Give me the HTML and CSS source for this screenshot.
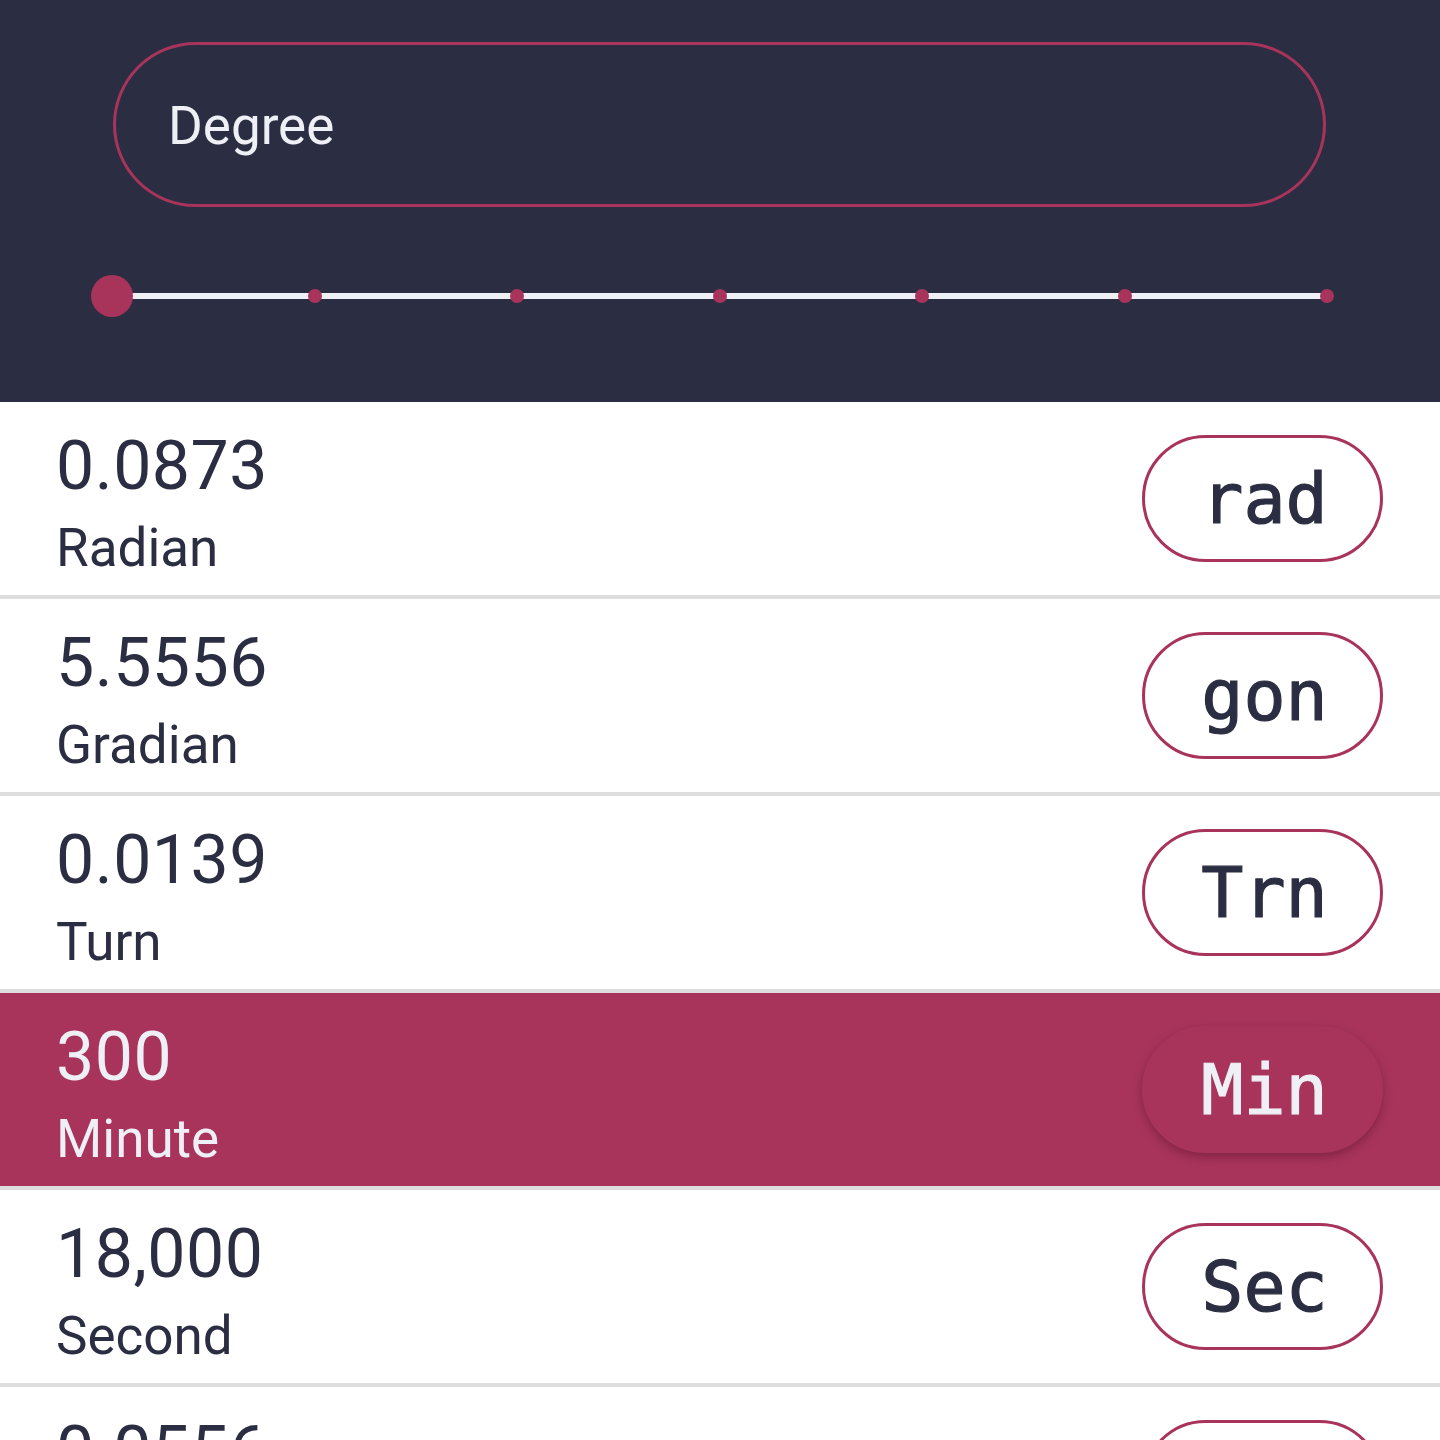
FILE: index.html
```html
<!DOCTYPE html>
<html lang="en">
<head>
<meta charset="utf-8">
<title>Angle converter</title>
<link rel="stylesheet" href="styles.css">
</head>
<body>
<header class="header">
  <div class="unit-field">Degree</div>
  <div class="slider">
    <span class="stop thumb"></span>
    <span class="stop"></span>
    <span class="stop"></span>
    <span class="stop"></span>
    <span class="stop"></span>
    <span class="stop"></span>
    <span class="stop"></span>
  </div>
</header>
<main class="list">
  <div class="row">
    <div class="texts"><div class="value">0.0873</div><div class="name">Radian</div></div>
    <div class="chip">rad</div>
  </div>
  <div class="row">
    <div class="texts"><div class="value">5.5556</div><div class="name">Gradian</div></div>
    <div class="chip">gon</div>
  </div>
  <div class="row">
    <div class="texts"><div class="value">0.0139</div><div class="name">Turn</div></div>
    <div class="chip">Trn</div>
  </div>
  <div class="row active">
    <div class="texts"><div class="value">300</div><div class="name">Minute</div></div>
    <div class="chip">Min</div>
  </div>
  <div class="row">
    <div class="texts"><div class="value">18,000</div><div class="name">Second</div></div>
    <div class="chip">Sec</div>
  </div>
  <div class="row">
    <div class="texts"><div class="value">0.0556</div><div class="name">Quadrant</div></div>
    <div class="chip">Qd</div>
  </div>
</main>
</body>
</html>
```
FILE: styles.css
```css
html, body {
  margin: 0;
  padding: 0;
  background: #ffffff;
  font-family: Roboto, "Noto Sans", sans-serif;
  overflow: hidden;
}

.header {
  background: #2b2e42;
  height: 402px;
  box-sizing: border-box;
  padding-top: 42px;
}

.unit-field {
  box-sizing: border-box;
  height: 165px;
  margin: 0 114px 0 113px;
  border: 3px solid #a8345b;
  border-radius: 83px;
  padding-left: 52px;
  padding-top: 4px;
  display: flex;
  align-items: center;
  color: #eef0f5;
  font-size: 53px;
  line-height: 1;
}

.slider {
  margin: 86px 113px 0 112px;
  height: 6px;
  background: #eef0f5;
  display: flex;
  justify-content: space-between;
  align-items: center;
}

.stop {
  flex: none;
  width: 14px;
  height: 14px;
  margin: 0 -7px;
  border-radius: 50%;
  background: #a8345b;
}

.stop.thumb {
  width: 42px;
  height: 42px;
  margin: 0 -21px;
}

.list {
  display: flex;
  flex-direction: column;
}

.row {
  height: 197px;
  box-sizing: border-box;
  border-bottom: 4px solid #dedede;
  padding: 0 57px 0 56px;
  display: flex;
  align-items: center;
  justify-content: space-between;
  color: #2b2e42;
  background: #ffffff;
}

.texts {
  display: flex;
  flex-direction: column;
  padding-top: 8px;
}

.value {
  font-size: 68px;
  line-height: 80px;
  letter-spacing: 0.5px;
}

.name {
  font-size: 53px;
  line-height: 64px;
  margin-top: 10px;
}

.chip {
  box-sizing: border-box;
  width: 241px;
  height: 127px;
  border: 3px solid #a8345b;
  border-radius: 64px;
  display: flex;
  align-items: center;
  justify-content: center;
  padding-left: 4px;
  font-family: "DejaVu Sans Mono", "Liberation Mono", monospace;
  font-size: 70px;
  line-height: 1;
  color: #2b2e42;
  -webkit-text-stroke: 1.2px currentColor;
}

.row.active {
  background: #a8345b;
  color: #eef0f5;
}

.row.active .chip {
  border-color: #a8345b;
  background: #a8345b;
  color: #eef0f5;
  box-shadow: 0 4px 10px rgba(60, 10, 30, 0.35);
}
```
